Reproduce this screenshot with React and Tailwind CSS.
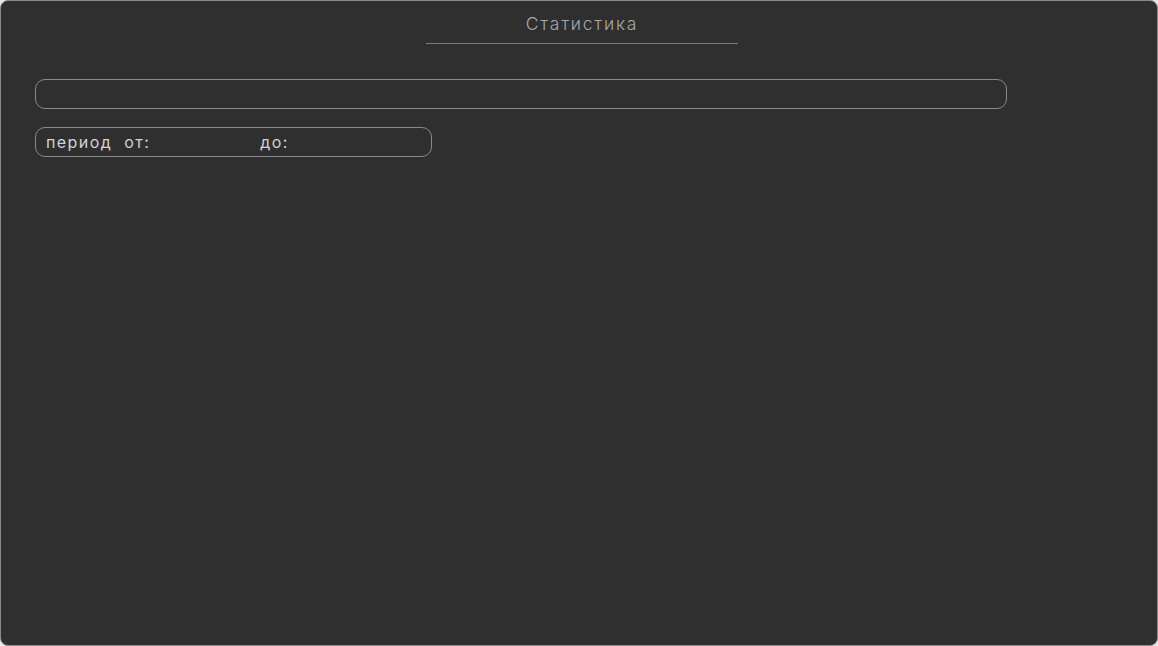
export default function App() {
  return (
    <div className="h-[646px] w-[1158px] bg-[#e8e8e8]" style={{ fontFamily: "Inter, 'Noto Sans', sans-serif" }}>
      <div className="h-full w-full rounded-[8px] border border-[#8a8a8a] bg-[#2f2f2f] flex flex-col">
        <div className="flex justify-center pl-[6px] pt-[12px]">
          <div className="w-[312px] border-b border-[#7a7a7a] pb-[8px] text-center text-[17.5px] leading-[22px] font-light tracking-[0.1em] text-[#a9a9a9]">
            Статистика
          </div>
        </div>
        <div className="pl-[34px] pt-[35px]">
          <div className="h-[30px] w-[972px] rounded-[10px] border border-[#8a8a8a]" />
          <div className="mt-[18px] flex h-[30px] w-[397px] items-center rounded-[10px] border border-[#8a8a8a] pl-[10px] text-[16px] tracking-[0.09em] text-[#d2d2d2]">
            <span>период</span>
            <span className="ml-[12px]">от:</span>
            <span className="ml-[110px]">до:</span>
          </div>
        </div>
      </div>
    </div>
  );
}
